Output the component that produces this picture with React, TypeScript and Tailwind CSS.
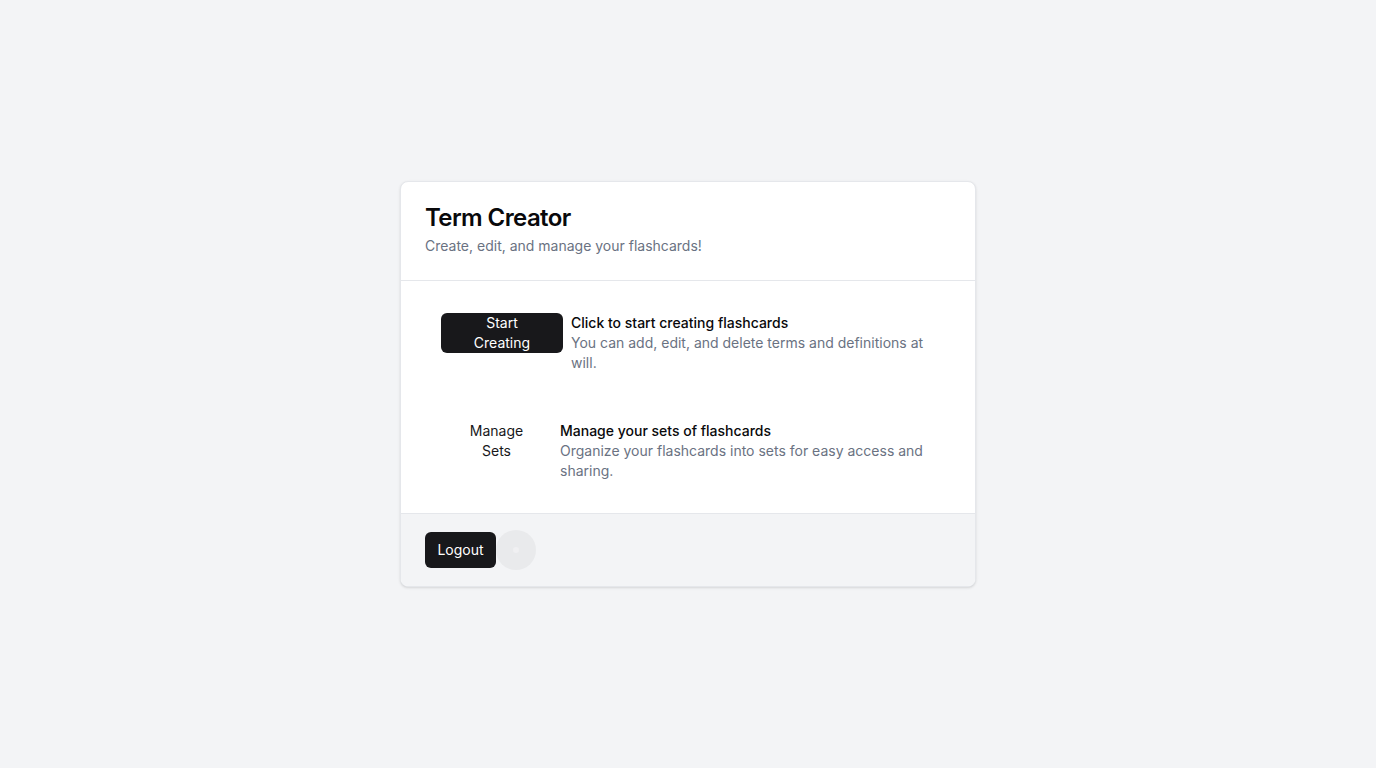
import React from 'react';

interface Feature {
  label: string;
  title: string;
  desc: string;
  primary: boolean;
}

const features: Feature[] = [
  {
    label: 'Start Creating',
    title: 'Click to start creating flashcards',
    desc: 'You can add, edit, and delete terms and definitions at will.',
    primary: true,
  },
  {
    label: 'Manage Sets',
    title: 'Manage your sets of flashcards',
    desc: 'Organize your flashcards into sets for easy access and sharing.',
    primary: false,
  },
];

function FeatureRow({ item }: { item: Feature }) {
  return (
    <div className="flex items-start gap-2 px-4">
      {item.primary ? (
        <button className="w-[122px] h-10 shrink-0 rounded-md bg-[#18181b] text-white text-sm leading-5 px-4">
          {item.label}
        </button>
      ) : (
        <button className="w-[111px] h-10 shrink-0 rounded-md text-[#18181b] text-sm leading-5 px-4">
          {item.label}
        </button>
      )}
      <div className="flex flex-col">
        <h3 className="text-sm leading-5 font-medium text-[#09090b]">{item.title}</h3>
        <p className="text-sm leading-5 text-gray-500">{item.desc}</p>
      </div>
    </div>
  );
}

export default function App() {
  return (
    <div className="min-h-screen bg-gray-100 flex items-center justify-center" style={{ fontFamily: 'Inter, sans-serif' }}>
      <div className="w-[576px] bg-white rounded-lg border border-gray-200 shadow-sm overflow-hidden">
        <div className="px-6 pt-5 pb-6 border-b border-gray-200">
          <h1 className="text-2xl font-semibold leading-8 text-[#09090b] tracking-tight">Term Creator</h1>
          <p className="text-sm leading-5 text-gray-500 mt-0.5">Create, edit, and manage your flashcards!</p>
        </div>
        <div className="px-6 pt-8 pb-8 flex flex-col gap-12">
          {features.map((f) => (
            <FeatureRow key={f.label} item={f} />
          ))}
        </div>
        <div className="px-6 py-4 bg-gray-100 border-t border-gray-200 flex items-center">
          <button className="h-9 w-[71px] rounded-md bg-[#18181b] text-white text-sm">Logout</button>
          <div className="w-10 h-10 rounded-full bg-[#e9eaec] flex items-center justify-center">
            <div className="w-1.5 h-1.5 rounded-full bg-[#f0f0f2]" />
          </div>
        </div>
      </div>
    </div>
  );
}
